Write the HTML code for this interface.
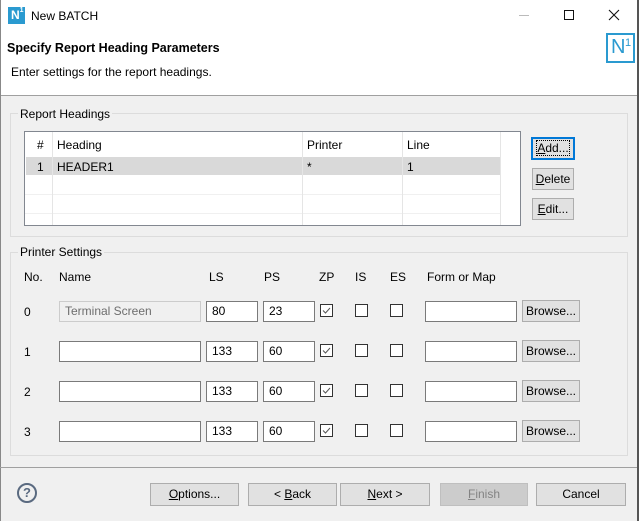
<!DOCTYPE html>
<html><head><style>
*{box-sizing:border-box;margin:0;padding:0}
body{width:639px;height:521px;overflow:hidden;font-family:"Liberation Sans",sans-serif;font-size:12px;color:#000;background:#f0f0f0;position:relative}
.a{position:absolute}
.t{position:absolute;white-space:nowrap;line-height:14px}
.inp{position:absolute;background:#fff;border:1px solid #7a7a7a;height:21px;padding:3px 5px;line-height:13px}
.btn{position:absolute;background:#e1e1e1;border:1px solid #adadad;text-align:center;line-height:20px;height:23px}
.cb{position:absolute;width:13px;height:13px;border:1px solid #333;background:#fff}
.grp{position:absolute;border:1px solid #dcdcdc}
.gl{position:absolute;background:#f0f0f0;padding:0 2px;line-height:14px}
u{text-decoration:underline}
</style></head><body>
<div class="a" style="left:0;top:0;width:639px;height:95px;background:#fff"></div>
<div class="a" style="left:0;top:95px;width:639px;height:1px;background:#a0a0a0"></div>
<div class="a" style="left:0;top:0;width:1px;height:521px;background:#888"></div>
<div class="a" style="left:637px;top:0;width:2px;height:521px;background:#555"></div>
<!-- title bar -->
<div class="a" style="left:8px;top:7px;width:17px;height:17px;background:#2a9ad0;color:#fff;font-size:12px;font-weight:bold;line-height:17px;padding-left:3px">N<span style="font-size:7px;vertical-align:top;line-height:8px">1</span></div>
<div class="t" style="left:31px;top:9px;font-size:12px">New BATCH</div>
<div class="a" style="left:519px;top:15px;width:10px;height:1px;background:#bbb"></div>
<div class="a" style="left:564px;top:10px;width:10px;height:10px;border:1px solid #111"></div>
<svg class="a" style="left:608px;top:9px" width="12" height="12"><path d="M1 1L11 11M11 1L1 11" stroke="#111" stroke-width="1.1"/></svg>
<div class="t" style="left:7px;top:41px;font-weight:bold;font-size:12.5px">Specify Report Heading Parameters</div>
<div class="t" style="left:11px;top:65px">Enter settings for the report headings.</div>
<div class="a" style="left:606px;top:33px;width:29px;height:30px;border:2px solid #2a9ad0;color:#2a9ad0;font-size:20px;line-height:24px;padding-left:3px">N<span style="position:absolute;left:17px;top:-4px;font-size:11px">1</span></div>
<!-- group 1 -->
<div class="grp" style="left:10px;top:113px;width:618px;height:124px"></div>
<div class="gl" style="left:18px;top:107px">Report Headings</div>
<div class="a" style="left:24px;top:131px;width:497px;height:95px;border:1px solid #828790;background:#fff"></div>
<div class="a" style="left:26px;top:157px;width:475px;height:18px;background:#d9d9d9"></div>
<div class="a" style="left:25px;top:194px;width:475px;height:1px;background:#f0f0f0"></div>
<div class="a" style="left:25px;top:213px;width:475px;height:1px;background:#f0f0f0"></div>
<div class="a" style="left:52px;top:132px;width:1px;height:93px;background:#e5e5e5"></div>
<div class="a" style="left:302px;top:132px;width:1px;height:93px;background:#e5e5e5"></div>
<div class="a" style="left:402px;top:132px;width:1px;height:93px;background:#e5e5e5"></div>
<div class="a" style="left:500px;top:132px;width:1px;height:93px;background:#e5e5e5"></div>
<div class="t" style="left:37px;top:138px">#</div>
<div class="t" style="left:57px;top:138px">Heading</div>
<div class="t" style="left:307px;top:138px">Printer</div>
<div class="t" style="left:407px;top:138px">Line</div>
<div class="t" style="left:37px;top:160px">1</div>
<div class="t" style="left:57px;top:160px">HEADER1</div>
<div class="t" style="left:307px;top:160px">*</div>
<div class="t" style="left:407px;top:160px">1</div>
<div class="btn" style="left:531px;top:137px;width:44px;height:23px;border:2px solid #0078d7;line-height:18px"><span style="outline:1px dotted #000"><u>A</u>dd...</span></div>
<div class="btn" style="left:532px;top:168px;width:42px;height:22px"><u>D</u>elete</div>
<div class="btn" style="left:532px;top:198px;width:42px;height:22px"><u>E</u>dit...</div>
<!-- group 2 -->
<div class="grp" style="left:10px;top:252px;width:618px;height:204px"></div>
<div class="gl" style="left:18px;top:245px">Printer Settings</div>
<div class="t" style="left:24px;top:270px">No.</div>
<div class="t" style="left:59px;top:270px">Name</div>
<div class="t" style="left:209px;top:270px">LS</div>
<div class="t" style="left:264px;top:270px">PS</div>
<div class="t" style="left:319px;top:270px">ZP</div>
<div class="t" style="left:355px;top:270px">IS</div>
<div class="t" style="left:390px;top:270px">ES</div>
<div class="t" style="left:427px;top:270px">Form or Map</div>

<div class="t" style="left:24px;top:305px">0</div>
<div class="inp" style="left:59px;top:301px;width:142px;background:#f0f0f0;border-color:#ccc;color:#6d6d6d">Terminal Screen</div>
<div class="inp" style="left:206px;top:301px;width:52px">80</div>
<div class="inp" style="left:263px;top:301px;width:52px">23</div>

<div class="t" style="left:24px;top:345px">1</div>
<div class="inp" style="left:59px;top:341px;width:142px"></div>
<div class="inp" style="left:206px;top:341px;width:52px">133</div>
<div class="inp" style="left:263px;top:341px;width:52px">60</div>

<div class="t" style="left:24px;top:385px">2</div>
<div class="inp" style="left:59px;top:381px;width:142px"></div>
<div class="inp" style="left:206px;top:381px;width:52px">133</div>
<div class="inp" style="left:263px;top:381px;width:52px">60</div>

<div class="t" style="left:24px;top:425px">3</div>
<div class="inp" style="left:59px;top:421px;width:142px"></div>
<div class="inp" style="left:206px;top:421px;width:52px">133</div>
<div class="inp" style="left:263px;top:421px;width:52px">60</div>

<!-- checkboxes & form/browse rows -->
<div class="cb" style="left:320px;top:304px"><svg width="11" height="11" style="position:absolute;left:0;top:0"><path d="M2 5.5L4.5 8L9 3" stroke="#555" fill="none"/></svg></div>
<div class="cb" style="left:355px;top:304px"></div><div class="cb" style="left:390px;top:304px"></div>
<div class="inp" style="left:425px;top:301px;width:92px"></div>
<div class="btn" style="left:522px;top:300px;width:58px;height:22px">Browse...</div>

<div class="cb" style="left:320px;top:344px"><svg width="11" height="11" style="position:absolute;left:0;top:0"><path d="M2 5.5L4.5 8L9 3" stroke="#555" fill="none"/></svg></div>
<div class="cb" style="left:355px;top:344px"></div><div class="cb" style="left:390px;top:344px"></div>
<div class="inp" style="left:425px;top:341px;width:92px"></div>
<div class="btn" style="left:522px;top:340px;width:58px;height:22px">Browse...</div>

<div class="cb" style="left:320px;top:384px"><svg width="11" height="11" style="position:absolute;left:0;top:0"><path d="M2 5.5L4.5 8L9 3" stroke="#555" fill="none"/></svg></div>
<div class="cb" style="left:355px;top:384px"></div><div class="cb" style="left:390px;top:384px"></div>
<div class="inp" style="left:425px;top:381px;width:92px"></div>
<div class="btn" style="left:522px;top:380px;width:58px;height:22px">Browse...</div>

<div class="cb" style="left:320px;top:424px"><svg width="11" height="11" style="position:absolute;left:0;top:0"><path d="M2 5.5L4.5 8L9 3" stroke="#555" fill="none"/></svg></div>
<div class="cb" style="left:355px;top:424px"></div><div class="cb" style="left:390px;top:424px"></div>
<div class="inp" style="left:425px;top:421px;width:92px"></div>
<div class="btn" style="left:522px;top:420px;width:58px;height:22px">Browse...</div>

<!-- footer -->
<div class="a" style="left:0;top:467px;width:637px;height:1px;background:#a0a0a0"></div>
<div class="a" style="left:17px;top:483px;width:20px;height:20px;border:2px solid #5a6a80;border-radius:50%;color:#5a6a80;font-weight:bold;font-size:13px;text-align:center;line-height:16px">?</div>
<div class="btn" style="left:150px;top:483px;width:89px"><u>O</u>ptions...</div>
<div class="btn" style="left:248px;top:483px;width:89px">&lt; <u>B</u>ack</div>
<div class="btn" style="left:340px;top:483px;width:90px"><u>N</u>ext &gt;</div>
<div class="btn" style="left:440px;top:483px;width:88px;background:#cccccc;border-color:#bfbfbf;color:#838383"><u>F</u>inish</div>
<div class="btn" style="left:536px;top:483px;width:90px">Cancel</div>
</body></html>
